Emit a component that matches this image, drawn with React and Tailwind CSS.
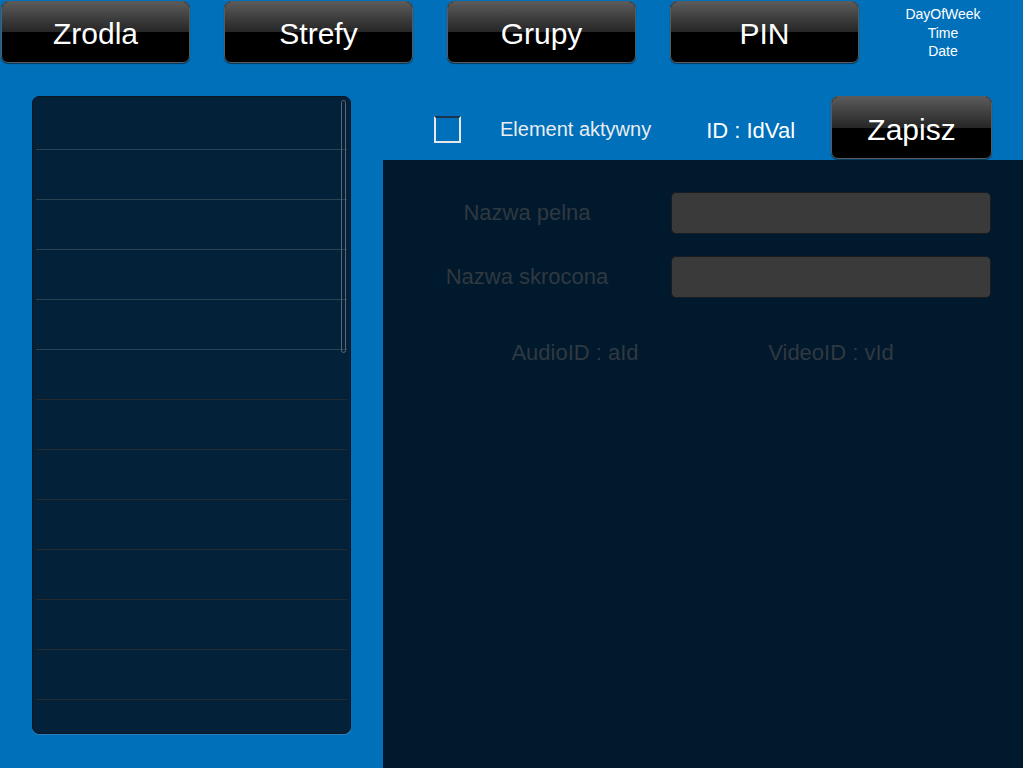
import React from 'react'

const TABS = ['Zrodla', 'Strefy', 'Grupy', 'PIN']

function GlossButton({ label, className, textClass }) {
  return (
    <button
      className={`relative overflow-hidden rounded-[7px] border border-[#5a5a5a] bg-black text-white shadow-[0_1px_1px_rgba(0,0,0,0.5)] ${className}`}
    >
      <span className="absolute inset-x-0 top-0 h-1/2 bg-gradient-to-b from-[#5b5b5b] to-[#262626]" />
      <span className={`relative ${textClass}`}>{label}</span>
    </button>
  )
}

export default function App() {
  const rows = Array.from({ length: 13 })

  return (
    <div className="w-[1023px] h-[768px] overflow-hidden bg-[#0070bb] font-['Liberation_Sans',Arial,sans-serif] flex flex-col">
      {/* top nav */}
      <div className="flex items-start pl-px pt-px h-[62px] shrink-0">
        <div className="flex gap-[34px]">
          {TABS.map(t => (
            <GlossButton key={t} label={t} className="w-[189px] h-[62px] pt-[3px]" textClass="text-[30px]" />
          ))}
        </div>
        <div className="ml-[11px] w-[146px] pt-[4px] flex flex-col items-center text-white text-[14px] leading-[18.5px]">
          <span>DayOfWeek</span>
          <span>Time</span>
          <span>Date</span>
        </div>
      </div>

      <div className="flex flex-1 min-h-0">
        {/* list */}
        <div className="ml-[32px] mt-[34px] w-[319px] h-[638px] shrink-0 relative rounded-[7px] border border-[#0b1620] bg-[#03223a] shadow-[0_1px_0_rgba(120,160,200,0.35)] overflow-hidden">
          <div className="pt-[3px] px-[3px]">
            {rows.map((_, i) => (
              <div
                key={i}
                className={`h-[50px] ${i < 12 ? 'border-b' : ''} ${i < 5 ? 'border-[#2b4252]' : 'border-[#252a2e]'}`}
              />
            ))}
          </div>
          <div className="absolute left-[308px] top-[3px] w-[5px] h-[253px] rounded-full border border-[#5b6670]" />
        </div>

        {/* right side */}
        <div className="ml-[32px] flex-1 flex flex-col">
          <div className="h-[98px] shrink-0 flex items-center">
            <div className="ml-[51px] mt-[36px] w-[27px] h-[27px] border-2 border-[#e6e9ec] border-t-[#1a3550]" />
            <div className="ml-[39px] mt-[36px] text-[20px] text-[#e9edf0]">Element aktywny</div>
            <div className="ml-[55px] mt-[38px] text-[22px] text-white">ID : IdVal</div>
            <GlossButton label="Zapisz" className="ml-[36px] mt-[33px] w-[161px] h-[63px] pt-[3px]" textClass="text-[30px]" />
          </div>
          <div className="flex-1 bg-[#01192d] relative">
            <div className="flex items-center h-[42px] mt-[32px]">
              <div className="w-[288px] text-center text-[22px] text-[#303840] -mt-[2px]">Nazwa pelna</div>
              <div className="w-[320px] h-[42px] rounded-[5px] border border-[#181c20] bg-[#3a3a3a]" />
            </div>
            <div className="flex items-center h-[42px] mt-[22px]">
              <div className="w-[288px] text-center text-[22px] text-[#303840] -mt-[2px]">Nazwa skrocona</div>
              <div className="w-[320px] h-[42px] rounded-[5px] border border-[#181c20] bg-[#3a3a3a]" />
            </div>
            <div className="flex mt-[38px] text-[22px] text-[#303840]">
              <div className="w-[384px] text-center">AudioID : aId</div>
              <div className="w-[128px] text-center">VideoID : vId</div>
            </div>
          </div>
        </div>
      </div>
    </div>
  )
}
